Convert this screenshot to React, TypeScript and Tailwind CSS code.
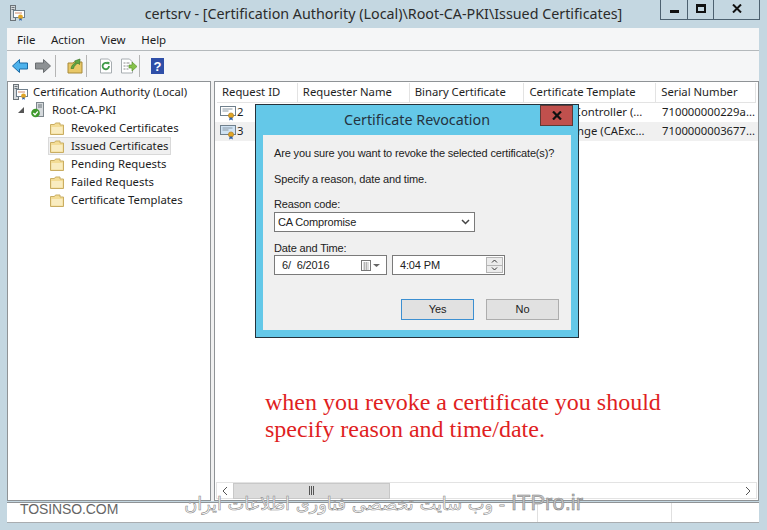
const Folder = () => (
  <svg width="14" height="13" viewBox="0 0 14 13" className="shrink-0">
    <path d="M0.500 2.500h4l1-1.500h4.500v2h3.500v9.500H0.500z" fill="#f3dc95" stroke="#c9ad62" />
    <path d="M1.500 5h11v6.500h-11z" fill="#f9ecc0" />
  </svg>
);

const Cert = ({ fill = "#fff" }: { fill?: string }) => (
  <svg width="16" height="16" viewBox="0 0 16 16" className="shrink-0">
    <rect x="0.500" y="1.500" width="15" height="9" fill={fill} stroke="#6f7f8c" />
    <path d="M2.500 4h10M2.500 6h6" stroke="#8a99a5" />
    <circle cx="11" cy="10.500" r="2.600" fill="#e0a526" stroke="#a8741a" strokeWidth="0.600" />
    <path d="M9.700 12.500l-.6 3 1.900-1 1.900 1-.6-3" fill="#2f5fa8" />
  </svg>
);

const ServerCert = () => (
  <svg width="16" height="16" viewBox="0 0 16 16" className="shrink-0">
    <rect x="0.500" y="0.500" width="5" height="15" fill="#d5d9dc" stroke="#6c7479" />
    <path d="M1.500 2.500h3M1.500 4.500h3" stroke="#6b747a" />
    <rect x="3.500" y="5.500" width="11" height="7" fill="#fff" stroke="#6f7f8c" />
    <path d="M5 8h7" stroke="#d08a6a" />
    <circle cx="10.500" cy="12" r="2.400" fill="#e0a526" />
    <path d="M9.500 13.500l-.4 2.300 1.400-.9 1.400.9-.4-2.300" fill="#2f5fa8" />
  </svg>
);

const ServerCheck = () => (
  <svg width="13" height="16" viewBox="0 0 13 16" className="shrink-0">
    <rect x="5.500" y="0.500" width="7" height="14" fill="#d5d9dc" stroke="#7d868c" />
    <path d="M7 3h4M7 5h4" stroke="#6b747a" />
    <circle cx="4.500" cy="11" r="4.300" fill="#3f9a2c" />
    <path d="M2.400 11l1.600 1.800 2.800-3.300" fill="none" stroke="#fff" strokeWidth="1.300" />
  </svg>
);

const TreeRow = ({ label, selected }: { label: string; selected?: boolean }) => (
  <div className="flex h-[18px] items-center">
    <div
      className={`flex h-[18px] items-center gap-[7px] border pl-[1px] pr-[2px] ${selected ? "border-[#d9d9d9] bg-[#f0f0f0]" : "border-transparent"}`}
    >
      <Folder />
      <span>{label}</span>
    </div>
  </div>
);

const columns = [
  { label: "Request ID", w: "w-[81px]" },
  { label: "Requester Name", w: "w-[112px]" },
  { label: "Binary Certificate", w: "w-[115px]" },
  { label: "Certificate Template", w: "w-[132px]" },
  { label: "Serial Number", w: "w-[100px]" },
];

const rows = [
  { id: "2", template: "Domain Controller (...", serial: "710000000229a...", striped: false },
  { id: "3", template: "CA Exchange (CAExc...", serial: "7100000003677...", striped: true },
];

export default function App() {
  return (
    <div className="relative flex h-[530px] w-[767px] flex-col overflow-hidden bg-[#c4d7e1] font-['Noto_Sans',sans-serif] text-[11.3px] text-[#1e1e1e]">
      {/* title bar */}
      <div className="relative flex h-[28px] shrink-0 items-center justify-center">
        <div className="absolute left-[10px] top-[5px]">
          <ServerCert />
        </div>
        <span className="text-[14.3px] text-[#2b2b2b]">certsrv - [Certification Authority (Local)\Root-CA-PKI\Issued Certificates]</span>
        <div className="absolute right-[7px] top-0 flex h-[20px] border border-t-0 border-[#4d6170] text-[#111]">
          <div className="flex w-[27px] items-center justify-center border-r border-[#4d6170]">
            <div className="mt-[3px] h-[3px] w-[9px] bg-[#111]" />
          </div>
          <div className="flex w-[26px] items-center justify-center border-r border-[#4d6170]">
            <div className="mb-[2px] h-[9px] w-[10px] border-2 border-t-[3px] border-[#111]" />
          </div>
          <div className="flex w-[45px] items-center justify-center">
            <svg width="10" height="9" viewBox="0 0 10 9" className="mb-[2px]">
              <path d="M1 0.500l8 8M9 0.500l-8 8" stroke="#111" strokeWidth="2" />
            </svg>
          </div>
        </div>
      </div>

      <div className="flex min-h-0 flex-1 flex-col pb-[7px] pl-[7px] pr-[8px]">
        {/* menu */}
        <div className="flex h-[23px] shrink-0 items-center gap-[15.500px] border-b border-[#b4b9bc] bg-[#f5f6f7] pl-[10px] pt-[1px] text-[11.500px]">
          <span>File</span>
          <span>Action</span>
          <span>View</span>
          <span>Help</span>
        </div>

        {/* toolbar */}
        <div className="flex h-[30px] shrink-0 items-center bg-[#f5f6f7] pl-[5px]">
          <svg width="16" height="16" viewBox="0 0 16 16">
            <path d="M7.500 1.500L0.500 8 7.500 14.500V11h8V5h-8z" fill="#4db2ec" stroke="#1b6aa5" />
          </svg>
          <svg width="16" height="16" viewBox="0 0 16 16" className="ml-[7px]">
            <path d="M8.500 1.500L15.500 8 8.500 14.500V11H0.500V5H8.500z" fill="#8d9194" stroke="#6a6e71" />
          </svg>
          <div className="ml-[4px] h-[22px] w-px bg-[#b5b5b5]" />
          <svg width="16" height="16" viewBox="0 0 16 16" className="ml-[11px]">
            <path d="M1 5h5l1-1h8v11H1z" fill="#e9c867" stroke="#a88a3a" />
            <path d="M4 10.500c.5-3 2.500-5 5-6L7.500 3 13 1l-.5 5.500-1.500-1.300c-2 .8-4 2.500-4.500 5.300z" fill="#62a845" stroke="#3f7a2b" strokeWidth="0.700" />
          </svg>
          <div className="ml-[3px] h-[22px] w-px bg-[#b5b5b5]" />
          <svg width="16" height="16" viewBox="0 0 16 16" className="ml-[11px]">
            <path d="M2.500 1h8l3 3v11h-11z" fill="#fff" stroke="#a7adb1" />
            <path d="M11 8a3.200 3.200 0 1 1-1-2.300" fill="none" stroke="#3f9a48" strokeWidth="1.800" />
            <path d="M8.500 3.800l3 .3-.4 3z" fill="#3f9a48" />
          </svg>
          <svg width="18" height="16" viewBox="0 0 18 16" className="ml-[6px]">
            <path d="M1.500 1h8l3 3v11h-11z" fill="#fff" stroke="#a7adb1" />
            <path d="M3.500 5h2M3.500 8h2M3.500 11h2M6.500 5h3M6.500 8h2M6.500 11h2" stroke="#8c8c8c" />
            <path d="M9 7h3V4l5 4.500-5 4.500v-3H9z" fill="#86c24a" stroke="#5d9330" strokeWidth="0.700" />
          </svg>
          <div className="ml-[1px] h-[22px] w-px bg-[#b5b5b5]" />
          <div className="ml-[11px] flex h-[16px] w-[13px] items-center justify-center bg-[#2f4fa8] font-['Liberation_Sans',sans-serif] text-[13px] font-bold leading-none text-white">
            ?
          </div>
        </div>

        {/* panes */}
        <div className="flex min-h-0 flex-1 gap-[3px] bg-[#f0f0f0]">
          <div className="flex w-[204px] shrink-0 flex-col border border-[#8f9396] bg-white pl-[5px] pt-[1px]">
            <div className="flex h-[18px] items-center gap-[4px]">
              <ServerCert />
              <span>Certification Authority (Local)</span>
            </div>
            <div className="flex h-[18px] items-center pl-[5px]">
              <svg width="6" height="6" viewBox="0 0 6 6" className="mr-[7px]">
                <path d="M6 0v6H0z" fill="#555" />
              </svg>
              <ServerCheck />
              <span className="ml-[8px]">Root-CA-PKI</span>
            </div>
            <div className="pl-[35px]">
              <TreeRow label="Revoked Certificates" />
              <TreeRow label="Issued Certificates" selected />
              <TreeRow label="Pending Requests" />
              <TreeRow label="Failed Requests" />
              <TreeRow label="Certificate Templates" />
            </div>
          </div>

          <div className="flex min-w-0 flex-1 flex-col border border-[#8f9396] bg-white">
            <div className="flex h-[21px] shrink-0 px-[2px] pt-[1px]">
              {columns.map((c) => (
                <div key={c.label} className={`flex items-center border-r border-b border-[#e3e3e3] pl-[5px] ${c.w}`}>
                  {c.label}
                </div>
              ))}
            </div>
            <div className="flex-1">
              {rows.map((r) => (
                <div key={r.id} className={`flex h-[19px] items-center pl-[5px] ${r.striped ? "bg-[#f0f0f0]" : ""}`}>
                  <Cert fill={r.striped ? "#cfe2f3" : "#fff"} />
                  <span className="ml-[1px] w-[292px] shrink-0">{r.id}</span>
                  <span className="w-[133px] shrink-0 truncate">{r.template}</span>
                  <span className="truncate">{r.serial}</span>
                </div>
              ))}
            </div>
            {/* horizontal scroll bar */}
            <div className="mx-[1px] mb-[1px] flex h-[17px] shrink-0 items-center border border-[#e3e3e3] bg-white">
              <div className="flex w-[16px] justify-center">
                <svg width="6" height="10" viewBox="0 0 6 10"><path d="M5 1L1 5l4 4" fill="none" stroke="#555" /></svg>
              </div>
              <div className="flex h-[16px] w-[157px] items-center justify-center border border-[#c8c8c8] bg-[#dcdcdc]">
                <div className="h-[9px] w-[5px] border-x border-[#555] after:mx-auto after:block after:h-full after:w-px after:bg-[#555]" />
              </div>
              <div className="ml-auto flex w-[16px] justify-center">
                <svg width="6" height="10" viewBox="0 0 6 10"><path d="M1 1l4 4-4 4" fill="none" stroke="#555" /></svg>
              </div>
            </div>
          </div>
        </div>

        {/* status bar */}
        <div className="mt-px flex h-[21px] shrink-0 border-b border-t border-b-[#a9adb0] border-t-[#8f9396] bg-white font-['Liberation_Sans',sans-serif] text-[14px] leading-[12px] tracking-[-0.1px] text-[#666]">
          <div className="w-[531px] border-r border-[#e0e0e0] pl-[13px]">TOSINSO.COM</div>
          <div className="w-[134px] border-r border-[#e0e0e0]" />
        </div>
      </div>

      {/* dialog */}
      <div className="absolute left-[255px] top-[104px] flex h-[234px] w-[324px] flex-col border border-[#25323b] bg-[#64c8e8]">
        <div className="relative flex h-[30px] shrink-0 items-center justify-center text-[14.3px] text-[#243340]">
          Certificate Revocation
          <div className="absolute right-[5px] top-0 flex h-[21px] w-[33px] items-center justify-center border border-[#5f3a36] bg-[#c0504d]">
            <svg width="10" height="9" viewBox="0 0 10 9"><path d="M1 0.500l8 8M9 0.500l-8 8" stroke="#111" strokeWidth="2.200" /></svg>
          </div>
        </div>
        <div className="mx-[7px] flex h-[195px] flex-col bg-[#f0f0f0] px-[11px] pt-[11px] font-['Liberation_Sans',sans-serif] text-[11px] leading-[15px] tracking-[-0.15px] text-[#222]">
          <div className="h-[26px] whitespace-nowrap">Are you sure you want to revoke the selected certificate(s)?</div>
          <div className="h-[25px]">Specify a reason, date and time.</div>
          <div className="h-[15px]">Reason code:</div>
          <div className="flex h-[20px] w-[201px] items-center justify-between border border-[#7a7a7a] bg-white pl-[3px] pr-[4px]">
            <span>CA Compromise</span>
            <svg width="9" height="6" viewBox="0 0 9 6"><path d="M1 1l3.500 3.500L8 1" fill="none" stroke="#444" strokeWidth="1.500" /></svg>
          </div>
          <div className="mt-[9px] h-[14px]">Date and Time:</div>
          <div className="flex gap-[5px]">
            <div className="flex h-[20px] w-[113px] items-center border border-[#7a7a7a] bg-white pl-[7px] pr-[5px]">
              <span className="whitespace-pre">6/  6/2016</span>
              <svg width="20" height="11" viewBox="0 0 20 11" className="ml-auto">
                <rect x="0.500" y="0.500" width="9" height="10" fill="#fff" stroke="#777" />
                <path d="M2 3h6M2 5h6M2 7h6M2 9h6M3.500 2v8M5.500 2v8" stroke="#aaa" strokeWidth="0.800" />
                <path d="M12 4h7l-3.500 3z" fill="#666" />
              </svg>
            </div>
            <div className="flex h-[20px] w-[113px] items-center border border-[#7a7a7a] bg-white pl-[7px] pr-[1px]">
              <span>4:04 PM</span>
              <div className="ml-auto flex h-[16px] w-[17px] flex-col border border-[#b5b5b5] bg-[#ececec]">
                <div className="flex flex-1 items-center justify-center border-b border-[#b5b5b5]">
                  <svg width="7" height="4" viewBox="0 0 7 4"><path d="M1 3.500l2.500-2.500L6 3.500" fill="none" stroke="#333" /></svg>
                </div>
                <div className="flex flex-1 items-center justify-center">
                  <svg width="7" height="4" viewBox="0 0 7 4"><path d="M1 .5L3.500 3 6 .5" fill="none" stroke="#333" /></svg>
                </div>
              </div>
            </div>
          </div>
          <div className="mt-[24px] flex justify-end gap-[12px] pr-px">
            <div className="flex h-[21px] w-[73px] items-center justify-center border border-[#3c8fd1] bg-[#e1e1e1]">Yes</div>
            <div className="flex h-[21px] w-[73px] items-center justify-center border border-[#adadad] bg-[#e1e1e1]">No</div>
          </div>
        </div>
      </div>

      {/* annotation */}
      <div className="absolute left-[265px] top-[389px] font-['Liberation_Serif',serif] text-[24px] leading-[27px] text-[#e01f1f]">
        when you revoke a certificate you should
        <br />
        specify reason and time/date.
      </div>

      {/* watermark */}
      <div
        dir="rtl"
        className="absolute left-[184px] top-[492px] w-[399px] whitespace-nowrap font-['DejaVu_Sans',sans-serif] text-[17.800px] leading-[22px] text-white [-webkit-text-stroke:0.6px_#8a8a8a]"
      >
        <span className="font-['Liberation_Sans',sans-serif] text-[22px] text-[#c4c4c4] [-webkit-text-stroke:0.5px_#808080]">ITPro.ir</span> - وب سایت تخصصی فناوری اطلاعات ایران
      </div>
    </div>
  );
}
